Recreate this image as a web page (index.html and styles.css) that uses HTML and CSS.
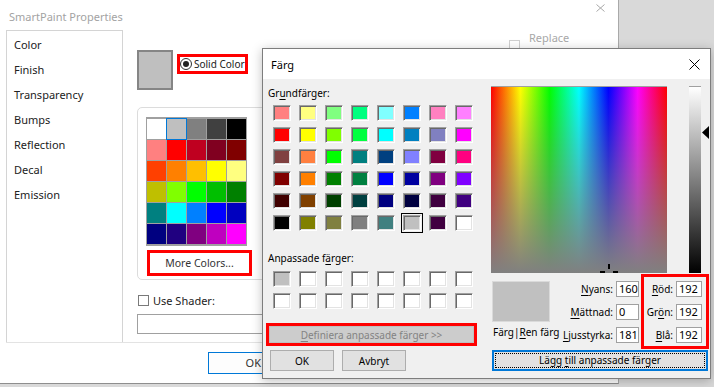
FILE: index.html
```html
<!DOCTYPE html>
<html lang="sv">

<head>
    <meta charset="UTF-8">
    <meta name="viewport" content="width=device-width, initial-scale=1.0">
    <title>SmartPaint Properties</title>
    <link rel="stylesheet" href="styles.css">
</head>

<body>
    <div class="props">
        <div class="props-title">
            <span>SmartPaint Properties</span>
            <svg class="props-close" width="9" height="8" viewBox="0 0 9 8">
                <path d="M0.5 0.5L8.5 7.5M8.5 0.5L0.5 7.5" stroke="#a8a8a8" stroke-width="1" fill="none"/>
            </svg>
        </div>

        <div class="props-main">
            <ul class="tabs">
                <li>Color</li>
                <li>Finish</li>
                <li>Transparency</li>
                <li>Bumps</li>
                <li>Reflection</li>
                <li>Decal</li>
                <li>Emission</li>
            </ul>

            <div class="color-pane">
                <div class="color-top">
                    <div class="current-swatch"></div>
                    <div class="solid-color"><span class="radio"></span>Solid Color</div>
                    <div class="replace"><span class="check"></span><span>Replace<br>selected</span></div>
                </div>

                <div class="palette-group">
                    <div class="palette">
                        <div style="background:#ffffff"></div>
                        <div class="selected" style="background:#bfbfbf"></div>
                        <div style="background:#808080"></div>
                        <div style="background:#404040"></div>
                        <div style="background:#000000"></div>
                        <div style="background:#ff8080"></div>
                        <div style="background:#ff0000"></div>
                        <div style="background:#bf0020"></div>
                        <div style="background:#800020"></div>
                        <div style="background:#800000"></div>
                        <div style="background:#ff4000"></div>
                        <div style="background:#ff8000"></div>
                        <div style="background:#ffbf00"></div>
                        <div style="background:#ffff00"></div>
                        <div style="background:#ffff80"></div>
                        <div style="background:#bfbf00"></div>
                        <div style="background:#80ff00"></div>
                        <div style="background:#00ff00"></div>
                        <div style="background:#00bf00"></div>
                        <div style="background:#008000"></div>
                        <div style="background:#008080"></div>
                        <div style="background:#00ffff"></div>
                        <div style="background:#0080ff"></div>
                        <div style="background:#0000ff"></div>
                        <div style="background:#0000bf"></div>
                        <div style="background:#000080"></div>
                        <div style="background:#200080"></div>
                        <div style="background:#800080"></div>
                        <div style="background:#bf00bf"></div>
                        <div style="background:#ff00ff"></div>
                    </div>
                    <button class="more-colors">More Colors...</button>
                </div>

                <div class="shader"><span class="check"></span>Use Shader:</div>
                <div class="shader-field"></div>
            </div>
        </div>

        <div class="props-footer">
            <button class="props-ok">OK</button>
        </div>
    </div>

    <div class="color-dialog">
        <div class="dlg-title">
            <span>Färg</span>
            <svg class="dlg-close" width="11" height="11" viewBox="0 0 11 11">
                <path d="M0.5 0.5L10.5 10.5M10.5 0.5L0.5 10.5" stroke="#000" stroke-width="1" fill="none"/>
            </svg>
        </div>

        <div class="dlg-body">
            <div class="dlg-left">
                <div class="dlg-label">Gr<u>u</u>ndfärger:</div>
                <div class="swatches">
                    <div style="background:#ff8080"></div>
                    <div style="background:#ffff80"></div>
                    <div style="background:#80ff80"></div>
                    <div style="background:#00ff80"></div>
                    <div style="background:#80ffff"></div>
                    <div style="background:#0080ff"></div>
                    <div style="background:#ff80c0"></div>
                    <div style="background:#ff80ff"></div>

                    <div style="background:#ff0000"></div>
                    <div style="background:#ffff00"></div>
                    <div style="background:#80ff00"></div>
                    <div style="background:#00ff40"></div>
                    <div style="background:#00ffff"></div>
                    <div style="background:#0080c0"></div>
                    <div style="background:#8080c0"></div>
                    <div style="background:#ff00ff"></div>

                    <div style="background:#804040"></div>
                    <div style="background:#ff8040"></div>
                    <div style="background:#00ff00"></div>
                    <div style="background:#008080"></div>
                    <div style="background:#004080"></div>
                    <div style="background:#8080ff"></div>
                    <div style="background:#800040"></div>
                    <div style="background:#ff0080"></div>

                    <div style="background:#800000"></div>
                    <div style="background:#ff8000"></div>
                    <div style="background:#008000"></div>
                    <div style="background:#008040"></div>
                    <div style="background:#0000ff"></div>
                    <div style="background:#0000a0"></div>
                    <div style="background:#800080"></div>
                    <div style="background:#8000ff"></div>

                    <div style="background:#400000"></div>
                    <div style="background:#804000"></div>
                    <div style="background:#004000"></div>
                    <div style="background:#004040"></div>
                    <div style="background:#000080"></div>
                    <div style="background:#000040"></div>
                    <div style="background:#400040"></div>
                    <div style="background:#400080"></div>

                    <div style="background:#000000"></div>
                    <div style="background:#808000"></div>
                    <div style="background:#808040"></div>
                    <div style="background:#808080"></div>
                    <div style="background:#408080"></div>
                    <div class="focused" style="background:#c0c0c0"></div>
                    <div style="background:#400040"></div>
                    <div style="background:#ffffff"></div>
                </div>

                <div class="dlg-label custom-label">Anpassade f<u>ä</u>rger:</div>
                <div class="swatches custom">
                    <div style="background:#c0c0c0"></div>
                    <div></div><div></div><div></div><div></div><div></div><div></div><div></div>
                    <div></div><div></div><div></div><div></div><div></div><div></div><div></div><div></div>
                </div>

                <div class="define-box">
                    <button class="define" disabled><u>D</u>efiniera anpassade färger &gt;&gt;</button>
                </div>

                <div class="dlg-buttons">
                    <button class="dlg-btn">OK</button>
                    <button class="dlg-btn">Avbryt</button>
                </div>
            </div>

            <div class="dlg-right">
                <div class="picker-row">
                    <div class="spectrum">
                        <svg class="crosshair" width="20" height="10" viewBox="0 0 20 10">
                            <rect x="8" y="0" width="2" height="5" fill="#000"/>
                            <rect x="0" y="7" width="5" height="2" fill="#000"/>
                            <rect x="13" y="7" width="5" height="2" fill="#000"/>
                        </svg>
                    </div>
                    <div class="lum-bar"></div>
                    <svg class="lum-arrow" width="7" height="13" viewBox="0 0 7 13">
                        <path d="M0 6.5L7 0V13Z" fill="#000"/>
                    </svg>
                </div>

                <div class="values-row">
                    <div class="preview-col">
                        <div class="preview"></div>
                        <div class="preview-label">Färg|<u>R</u>en färg</div>
                    </div>

                    <div class="fields">
                        <span class="field-label"><u>N</u>yans:</span>
                        <span class="field-input">160</span>
                        <span class="field-label"><u>M</u>ättnad:</span>
                        <span class="field-input">0</span>
                        <span class="field-label"><u>L</u>jusstyrka:</span>
                        <span class="field-input">181</span>
                    </div>

                    <div class="fields rgb-box">
                        <span class="field-label"><u>R</u>öd:</span>
                        <span class="field-input">192</span>
                        <span class="field-label">Gr<u>ö</u>n:</span>
                        <span class="field-input">192</span>
                        <span class="field-label"><u>B</u>lå:</span>
                        <span class="field-input">192</span>
                    </div>
                </div>

                <button class="add-custom"><span>Lägg <u>t</u>ill anpassade färger</span></button>
            </div>
        </div>
    </div>
</body>

</html>
```

FILE: styles.css
```css
body {
    margin: 0;
    width: 714px;
    height: 387px;
    overflow: hidden;
    position: relative;
    background-color: #d9d9d9;
    font-family: "Noto Sans", "Open Sans", sans-serif;
    color: #222;
}

button {
    font-family: inherit;
    padding: 0;
    cursor: default;
}

u {
    text-decoration-thickness: 1px;
    text-underline-offset: 2px;
}

/* SmartPaint Properties window (inactive, behind) */

.props {
    width: 619px;
    height: 384px;
    box-sizing: border-box;
    background-color: #fff;
    border-right: 1px solid #a9a9a9;
    border-bottom: 1px solid #8e8e8e;
}

.props-title {
    height: 30px;
    display: flex;
    align-items: center;
    justify-content: space-between;
    padding: 2px 13px 0 9px;
    box-sizing: border-box;
    font-size: 11px;
    color: #a3a3a3;
}

.props-close {
    margin-top: -16px;
}

.props-main {
    display: flex;
    padding-left: 6px;
    height: 312px;
}

.tabs {
    list-style: none;
    margin: 0;
    padding: 1px 0 0 7px;
    width: 117px;
    box-sizing: border-box;
    border: 1px solid #d4d4d4;
    border-bottom: none;
    font-size: 11px;
    line-height: 25px;
}

.color-pane {
    margin-left: 14px;
    padding-top: 20px;
    font-size: 11px;
}

.color-top {
    display: flex;
    align-items: flex-start;
}

.current-swatch {
    width: 36px;
    height: 40px;
    box-sizing: border-box;
    border: 2px solid #858585;
    background-color: #bfbfbf;
}

.solid-color {
    margin: 4px 0 0 4px;
    width: 71px;
    height: 20px;
    box-sizing: border-box;
    border: 3px solid #f00;
    display: flex;
    align-items: center;
    gap: 2px;
    padding-left: 0;
    font-size: 10px;
    white-space: nowrap;
}

.radio {
    flex-shrink: 0;
    width: 12px;
    height: 12px;
    box-sizing: border-box;
    border: 1px solid #333;
    border-radius: 50%;
    display: flex;
    align-items: center;
    justify-content: center;
}

.radio::after {
    content: "";
    width: 6px;
    height: 6px;
    border-radius: 50%;
    background-color: #222;
}

.replace {
    margin: -19px 0 0 261px;
    display: flex;
    align-items: center;
    gap: 9px;
    color: #a8a8a8;
    line-height: 14px;
}

.check {
    flex-shrink: 0;
    width: 11px;
    height: 11px;
    box-sizing: border-box;
    border: 1px solid #333;
    background-color: #fff;
}

.replace .check {
    border-color: #d0d0d0;
}

.palette-group {
    margin-top: 17px;
    width: 200px;
    height: 173px;
    box-sizing: border-box;
    border: 1px solid #dcdcdc;
    border-radius: 5px;
    padding: 9px 0 0 8px;
}

.palette {
    display: grid;
    grid-template-columns: repeat(5, 19px);
    grid-auto-rows: 20px;
    gap: 1px;
    padding: 2px 1px;
    width: 101px;
    box-sizing: border-box;
    background-color: #a0a0a0;
}

.palette .selected {
    outline: 1px solid #0078d7;
}

.more-colors {
    margin: 4px 0 0 1px;
    width: 105px;
    height: 26px;
    border: 3px solid #f00;
    background-color: #fff;
    font-size: 10.5px;
    color: #333;
}

.shader {
    margin-top: 13px;
    display: flex;
    align-items: center;
    gap: 4px;
    margin-left: 1px;
}

.shader .check {
    border-color: #7a7a7a;
}

.shader-field {
    margin-top: 6px;
    width: 200px;
    height: 20px;
    box-sizing: border-box;
    border: 1px solid #a0a0a0;
}

.props-footer {
    margin-left: 6px;
    border-top: 1px solid #e3e3e3;
    padding: 7px 0 0 202px;
}

.props-ok {
    width: 75px;
    height: 22px;
    border: 1px solid #0078d7;
    background-color: #fdfdfd;
    font-size: 11px;
    color: #333;
    text-align: right;
    padding-right: 21px;
}

/* Färg dialog */

.color-dialog {
    position: absolute;
    left: 262px;
    top: 48px;
    width: 449px;
    height: 331px;
    box-sizing: border-box;
    border: 1px solid #7d7d7d;
    box-shadow: 0 2px 10px rgba(0, 0, 0, 0.25);
    background-color: #f0f0f0;
    font-size: 10px;
    color: #000;
    display: flex;
    flex-direction: column;
}

.dlg-title {
    height: 30px;
    flex-shrink: 0;
    background-color: #fff;
    display: flex;
    align-items: center;
    justify-content: space-between;
    padding: 0 10px 0 8px;
    font-size: 11px;
}

.dlg-body {
    display: flex;
}

.dlg-left {
    width: 228px;
    padding-left: 5px;
    box-sizing: border-box;
}

.dlg-label {
    margin-top: 6px;
    line-height: 16px;
}

.custom-label {
    margin-top: 19px;
}

.swatches {
    margin: 4px 0 0 5px;
    display: grid;
    grid-template-columns: repeat(8, 18px);
    grid-auto-rows: 16px;
    column-gap: 8px;
    row-gap: 6px;
}

.swatches.custom {
    margin-top: 5px;
}

.swatches div {
    box-sizing: border-box;
    border: 1px solid;
    border-color: #a0a0a0 #fff #fff #a0a0a0;
    box-shadow: inset 1px 1px #696969, inset -1px -1px #e3e3e3;
}

.swatches.custom div {
    background-color: #fff;
}

.swatches .focused {
    outline: 1px solid #000;
    outline-offset: 1px;
}

.define-box {
    margin: 14px 0 0 -2px;
    width: 211px;
    height: 23px;
    box-sizing: border-box;
    border: 3px solid #f00;
}

.define {
    display: block;
    width: 100%;
    height: 100%;
    border: 1px solid #bfbfbf;
    background-color: #cccccc;
    color: #838383;
    font-size: 10px;
}

.dlg-buttons {
    margin: 4px 0 0 2px;
    display: flex;
    gap: 8px;
}

.dlg-btn {
    width: 64px;
    height: 21px;
    border: 1px solid #adadad;
    background-color: #e1e1e1;
    font-size: 10px;
    color: #000;
}

.dlg-right {
    padding-top: 7px;
}

.picker-row {
    display: flex;
    align-items: flex-start;
}

.spectrum {
    position: relative;
    width: 176px;
    height: 187px;
    background:
        linear-gradient(to bottom, rgba(128, 128, 128, 0), #808080),
        linear-gradient(to right, #f00, #ff0 16.7%, #0f0 33.3%, #0ff 50%, #00f 66.7%, #f0f 83.3%, #f00);
    border-top: 1px solid #a0a0a0;
    box-sizing: border-box;
}

.crosshair {
    position: absolute;
    left: 109px;
    top: 177px;
}

.lum-bar {
    margin-left: 22px;
    width: 12px;
    height: 187px;
    box-sizing: border-box;
    border-top: 1px solid #a0a0a0;
    background: linear-gradient(to bottom, #fff, #000);
}

.lum-arrow {
    margin: 40px 0 0 1px;
}

.values-row {
    margin-top: 1px;
    display: flex;
    align-items: flex-start;
}

.preview-col {
    width: 66px;
    padding-top: 7px;
}

.preview {
    margin-left: 1px;
    width: 58px;
    height: 41px;
    box-sizing: border-box;
    border: 1px solid #dadada;
    background-color: #c0c0c0;
}

.preview-label {
    margin: 2px 0 0 2px;
    line-height: 16px;
    white-space: nowrap;
}

.fields {
    display: grid;
    grid-template-columns: 56px 23px;
    grid-auto-rows: 16px;
    column-gap: 3px;
    row-gap: 7px;
    padding-top: 7px;
    margin-right: 2px;
}

.field-label {
    text-align: right;
    line-height: 16px;
    white-space: nowrap;
}

.field-input {
    box-sizing: border-box;
    border: 1px solid #a0a0a0;
    background-color: #fff;
    line-height: 14px;
    padding-left: 2px;
    font-size: 11px;
}

.rgb-box {
    margin-right: 0;
    grid-template-columns: 29px 26px;
    border: 3px solid #f00;
    padding: 4px 4px 3px 0;
}

.add-custom {
    margin: 1px 0 0 1px;
    display: block;
    width: 216px;
    height: 21px;
    box-sizing: border-box;
    border: 2px solid #0078d7;
    background-color: #e1e1e1;
    padding: 1px;
    font-size: 10px;
    color: #000;
}

.add-custom span {
    display: block;
    height: 100%;
    box-sizing: border-box;
    border: 1px dotted #000;
    line-height: 13px;
}
```
